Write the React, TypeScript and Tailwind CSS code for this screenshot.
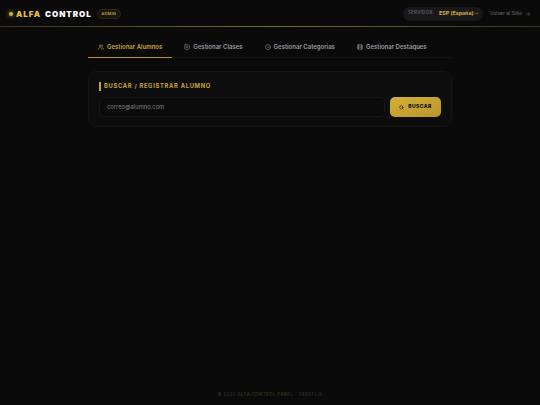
import { ArrowRight, ChevronDown, CircleDot, Film, Search, SquarePlay, Users } from 'lucide-react';
import type { LucideIcon } from 'lucide-react';

const TABS: { label: string; icon: LucideIcon; active?: boolean }[] = [
  { label: 'Gestionar Alumnos', icon: Users, active: true },
  { label: 'Gestionar Clases', icon: SquarePlay },
  { label: 'Gestionar Categorias', icon: CircleDot },
  { label: 'Gestionar Destaques', icon: Film },
];

export default function App() {
  return (
    <div className="flex h-[405px] w-[540px] flex-col overflow-hidden bg-[#0a0a0a] font-['Inter',sans-serif] text-white">
      {/* Header */}
      <header className="relative flex h-[27px] shrink-0 items-center justify-between pl-[9px] pr-[9px]">
        <div className="flex items-center">
          <span className="h-[4px] w-[4px] rounded-full bg-[#d4af37] shadow-[0_0_4px_#d4af37]" />
          <span className="ml-[3px] whitespace-nowrap text-[8px] font-black tracking-[0.12em] text-[#e2bd45]">ALFA</span>
          <span className="ml-[4px] whitespace-nowrap text-[8px] font-black tracking-[0.12em] text-white">CONTROL</span>
          <span className="ml-[5px] flex h-[10px] w-[24px] items-center justify-center rounded-full border border-[#2a2514] bg-[#17150c] text-[4px] font-bold tracking-[0.06em] text-[#b3953a]">
            ADMIN
          </span>
        </div>
        <div className="flex items-center gap-[7px]">
          <div className="flex h-[14px] w-[80px] items-center rounded-full bg-[#18181b] pl-[5px]">
            <span className="whitespace-nowrap text-[4.5px] font-semibold tracking-[0.05em] text-[#5f5f65]">SERVIDOR:</span>
            <span className="ml-[5px] whitespace-nowrap text-[5.3px] font-bold text-[#d4af37]">ESP (España)</span>
            <ChevronDown className="ml-[1px] h-[5px] w-[5px] text-[#d4af37]" strokeWidth={3} />
          </div>
          <span className="flex items-center gap-[3px] whitespace-nowrap text-[5px] text-[#6b6b70]">
            Volver al Sitio
            <ArrowRight className="h-[6px] w-[6px]" />
          </span>
        </div>
        <div className="absolute inset-x-0 bottom-0 h-px bg-gradient-to-r from-[#3a3320] via-[#7a6a35] to-[#3a3320]" />
      </header>

      {/* Main */}
      <main className="mx-auto flex w-[364px] flex-1 flex-col pt-[9px]">
        <nav className="flex h-[22px] gap-[2px] border-b border-[#141414]">
          {TABS.map((tab) => (
            <div
              key={tab.label}
              className={
                tab.active
                  ? 'mb-[-1px] flex h-[22px] items-center gap-[3px] border-b border-[#b3953a] px-[10px] text-[#c9a53a]'
                  : 'flex h-[21px] items-center gap-[3px] px-[10px] text-[#9a9aa0]'
              }
            >
              <tab.icon className="h-[6px] w-[6px] shrink-0" />
              <span className="whitespace-nowrap text-[6px] font-semibold">{tab.label}</span>
            </div>
          ))}
        </nav>

        <section className="mt-[13px] h-[56px] rounded-[8px] border border-[#141414] bg-[#0d0d0d] px-[10px] pt-[10px]">
          <div className="flex h-[9px] items-center border-l-2 border-[#c9a53a] pl-[3px]">
            <h2 className="whitespace-nowrap text-[5.8px] font-bold tracking-[0.12em] text-[#c9a53a]">BUSCAR / REGISTRAR ALUMNO</h2>
          </div>
          <div className="mt-[6px] flex gap-[5px]">
            <div className="flex h-[20px] flex-1 items-center rounded-[4px] border border-[#161616] bg-[#0b0b0b] px-[7px]">
              <span className="text-[5.8px] text-[#808080]">correo@alumno.com</span>
            </div>
            <button className="flex h-[20px] w-[51px] items-center justify-center gap-[4px] rounded-[5px] bg-gradient-to-br from-[#d4af37] to-[#b8962e] text-[#0a0a0a]">
              <Search className="h-[5px] w-[5px]" strokeWidth={2.5} />
              <span className="text-[5px] font-extrabold tracking-[0.08em]">BUSCAR</span>
            </button>
          </div>
        </section>
      </main>

      {/* Footer */}
      <footer className="flex h-[13px] shrink-0 items-start justify-center text-[4.3px] tracking-[0.1em] text-[#3a3a3a]">
        <span>© 2026</span>
        <span className="ml-[2px] text-[#4a4120]">ALFA CONTROL PANEL</span>
        <span className="ml-[2px]">· TRADFLIX</span>
      </footer>
    </div>
  );
}
